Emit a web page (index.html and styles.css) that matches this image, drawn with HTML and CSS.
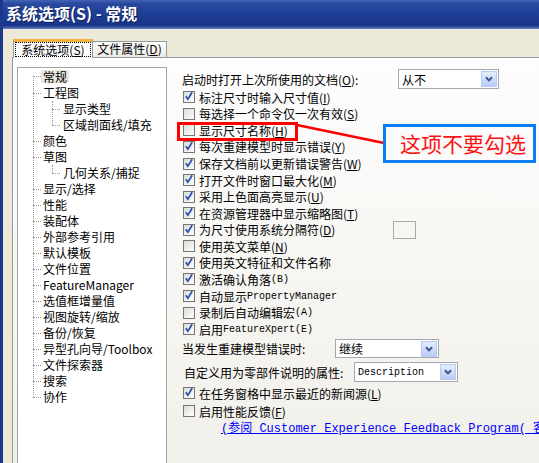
FILE: index.html
```html
<!DOCTYPE html>
<html lang="zh-CN">

<head>
    <meta charset="UTF-8">
    <title>系统选项(S) - 常规</title>
    <link rel="stylesheet" href="styles.css">
</head>

<body>
    <div class="window">
        <div class="titlebar">系统选项(S) - 常规</div>
        <div class="dialog">
            <div class="tabs">
                <div class="tab active"><span class="focus">系统选项(<u>S</u>)</span></div>
                <div class="tab">文件属性(<u>D</u>)</div>
            </div>
            <div class="panel">
                <div class="tree">
                    <ul class="tree-root">
                        <li><span class="label sel">常规</span></li>
                        <li><span class="label">工程图</span>
                            <ul class="tree-sub">
                                <li><span class="label">显示类型</span></li>
                                <li><span class="label">区域剖面线/填充</span></li>
                            </ul>
                        </li>
                        <li><span class="label">颜色</span></li>
                        <li><span class="label">草图</span>
                            <ul class="tree-sub">
                                <li><span class="label">几何关系/捕捉</span></li>
                            </ul>
                        </li>
                        <li><span class="label">显示/选择</span></li>
                        <li><span class="label">性能</span></li>
                        <li><span class="label">装配体</span></li>
                        <li><span class="label">外部参考引用</span></li>
                        <li><span class="label">默认模板</span></li>
                        <li><span class="label">文件位置</span></li>
                        <li><span class="label">FeatureManager</span></li>
                        <li><span class="label">选值框增量值</span></li>
                        <li><span class="label">视图旋转/缩放</span></li>
                        <li><span class="label">备份/恢复</span></li>
                        <li><span class="label">异型孔向导/Toolbox</span></li>
                        <li><span class="label">文件探索器</span></li>
                        <li><span class="label">搜索</span></li>
                        <li><span class="label">协作</span></li>
                    </ul>
                </div>

                <div class="options">
                    <div class="row first">
                        <span class="lbl w-open">启动时打开上次所使用的文档(<u>O</u>):</span>
                        <div class="combo w-never"><span class="combo-text">从不</span><span class="combo-btn"><svg viewBox="0 0 15 16"><path d="M4 6 7.5 9.5 11 6"/></svg></span></div>
                    </div>
                    <div class="row"><span class="cb"><svg viewBox="0 0 12 12"><path d="M2.2 5.2 4.6 8.6 9.8 0.4"/></svg></span>标注尺寸时输入尺寸值(<u>I</u>)</div>
                    <div class="row"><span class="cb"></span>每选择一个命令仅一次有效(<u>S</u>)</div>
                    <div class="row"><span class="cb"></span>显示尺寸名称(<u>H</u>)</div>
                    <div class="row"><span class="cb"><svg viewBox="0 0 12 12"><path d="M2.2 5.2 4.6 8.6 9.8 0.4"/></svg></span>每次重建模型时显示错误(<u>Y</u>)</div>
                    <div class="row"><span class="cb"><svg viewBox="0 0 12 12"><path d="M2.2 5.2 4.6 8.6 9.8 0.4"/></svg></span>保存文档前以更新错误警告(<u>W</u>)</div>
                    <div class="row"><span class="cb"><svg viewBox="0 0 12 12"><path d="M2.2 5.2 4.6 8.6 9.8 0.4"/></svg></span>打开文件时窗口最大化(<u>M</u>)</div>
                    <div class="row"><span class="cb"><svg viewBox="0 0 12 12"><path d="M2.2 5.2 4.6 8.6 9.8 0.4"/></svg></span>采用上色面高亮显示(<u>U</u>)</div>
                    <div class="row"><span class="cb"><svg viewBox="0 0 12 12"><path d="M2.2 5.2 4.6 8.6 9.8 0.4"/></svg></span>在资源管理器中显示缩略图(<u>T</u>)</div>
                    <div class="row"><span class="cb"><svg viewBox="0 0 12 12"><path d="M2.2 5.2 4.6 8.6 9.8 0.4"/></svg></span><span class="lbl w-sep">为尺寸使用系统分隔符(<u>D</u>)</span><span class="sep-box"></span></div>
                    <div class="row"><span class="cb"></span>使用英文菜单(<u>N</u>)</div>
                    <div class="row"><span class="cb"><svg viewBox="0 0 12 12"><path d="M2.2 5.2 4.6 8.6 9.8 0.4"/></svg></span>使用英文特征和文件名称</div>
                    <div class="row"><span class="cb"><svg viewBox="0 0 12 12"><path d="M2.2 5.2 4.6 8.6 9.8 0.4"/></svg></span>激活确认角落<span class="mono">(B)</span></div>
                    <div class="row"><span class="cb"><svg viewBox="0 0 12 12"><path d="M2.2 5.2 4.6 8.6 9.8 0.4"/></svg></span>自动显示 <span class="mono">PropertyManager</span></div>
                    <div class="row"><span class="cb"></span>录制后自动编辑宏<span class="mono">(A)</span></div>
                    <div class="row"><span class="cb"><svg viewBox="0 0 12 12"><path d="M2.2 5.2 4.6 8.6 9.8 0.4"/></svg></span>启用 <span class="mono">FeatureXpert(E)</span></div>

                    <div class="row combo-a">
                        <span class="lbl w-rebuild">当发生重建模型错误时:</span>
                        <div class="combo w-cont"><span class="combo-text">继续</span><span class="combo-btn"><svg viewBox="0 0 15 16"><path d="M4 6 7.5 9.5 11 6"/></svg></span></div>
                    </div>
                    <div class="row combo-b">
                        <span class="lbl w-prop">自定义用为零部件说明的属性:</span>
                        <div class="combo w-desc"><span class="combo-text mono">Description</span><span class="combo-btn"><svg viewBox="0 0 15 16"><path d="M4 6 7.5 9.5 11 6"/></svg></span></div>
                    </div>
                    <div class="row tall"><span class="cb"><svg viewBox="0 0 12 12"><path d="M2.2 5.2 4.6 8.6 9.8 0.4"/></svg></span>在任务窗格中显示最近的新闻源(<u>L</u>)</div>
                    <div class="row tall"><span class="cb"></span>启用性能反馈(<u>F</u>)</div>
                    <div class="row link-row"><a class="link" href="">(参阅 Customer Experience Feedback Program( 客户经历反馈计划))</a></div>
                </div>
            </div>
        </div>

        <!-- annotation drawn over the dialog -->
        <div class="mark-box"></div>
        <svg class="mark-line" viewBox="0 0 539 463"><line x1="297" y1="125" x2="384" y2="143"/></svg>
        <div class="callout">这项不要勾选</div>
    </div>
</body>

</html>
```

FILE: styles.css
```css
* {
    box-sizing: border-box;
    padding: 0;
    margin: 0;
}

body {
    width: 539px;
    height: 463px;
    overflow: hidden;
    color: black;
    font-family: "Noto Sans CJK SC", sans-serif;
    font-size: 12px;
    background-color: #ece9d8;
}

.window {
    position: relative;
    height: 463px;
    border-left: 3px solid #1b398c;
    background-color: #ece9d8;
    overflow: hidden;
}

.titlebar {
    height: 29px;
    padding-left: 3px;
    line-height: 27px;
    color: #fff;
    font-size: 16px;
    font-weight: bold;
    text-shadow: 1px 1px #0b1d5c;
    background: linear-gradient(#4464b5 0%, #2a4aa0 12%, #1e3d94 50%, #19358a 88%, #6b82bd 100%);
}

.dialog {
    padding-top: 10px;
}

/* tabs */
.tabs {
    display: flex;
    align-items: flex-end;
    height: 19px;
    margin-left: 10px;
    margin-bottom: -1px;
    position: relative;
    z-index: 1;
}

.tab {
    height: 16px;
    margin-bottom: 1px;
    padding: 0 4px;
    border: 1px solid #919b9c;
    border-bottom: none;
    background: linear-gradient(#ffffff, #ecebe6);
    line-height: 14px;
    white-space: nowrap;
}

.tab.active {
    width: 80px;
    height: 19px;
    margin-bottom: 0;
    padding: 0 1px;
    border-top: 3px solid #f5b23a;
    background: #fcfcfe;
}

.tab.active .focus {
    display: block;
    height: 15px;
    border: 1px dotted #000;
    text-align: center;
    line-height: 13px;
}

.tab:not(.active) {
    width: 74px;
    border-left: none;
    text-align: center;
}

/* page panel */
.panel {
    display: flex;
    height: 420px;
    margin-left: 9px;
    border: 1px solid #919b9c;
    border-right: none;
    background: linear-gradient(#fdfdfd, #f6f5f1 60%, #f1efe9);
}

.tree {
    flex: none;
    width: 150px;
    height: 420px;
    margin: 9px 0 0 4px;
    border: 1px solid #a3a3a3;
    background-color: #fff;
}

.tree ul {
    list-style: none;
}

.tree-root {
    position: relative;
}

.tree-root::before {
    content: "";
    position: absolute;
    left: 15px;
    top: 8px;
    bottom: 8px;
    border-left: 1px dotted #9a9a9a;
}

.tree-root > li {
    position: relative;
    padding-left: 25px;
}

.tree-root > li::before,
.tree-sub > li::before {
    content: "";
    position: absolute;
    top: 8px;
    width: 8px;
    border-top: 1px dotted #9a9a9a;
}

.tree-root > li::before {
    left: 15px;
}

.tree-sub {
    position: relative;
    margin-left: -25px;
}

.tree-sub::before {
    content: "";
    position: absolute;
    left: 34px;
    top: 0;
    bottom: 8px;
    border-left: 1px dotted #9a9a9a;
}

.tree-sub > li {
    position: relative;
    padding-left: 45px;
}

.tree-sub > li::before {
    left: 34px;
}

.tree .label {
    display: block;
    height: 16px;
    line-height: 16px;
    white-space: nowrap;
}

.tree .label.sel {
    display: inline-block;
    height: 13px;
    margin: 1px 0 2px -2px;
    padding: 0 2px;
    line-height: 13px;
    background-color: #e9e7df;
}

/* option list */
.options {
    flex: 1;
    margin-left: 15px;
    padding-top: 11px;
    white-space: nowrap;
}

.row {
    display: flex;
    align-items: center;
    height: 16.57px;
}

.row.first {
    height: 20px;
}

.row.combo-a {
    height: 23px;
}

.row.combo-b {
    height: 24px;
    padding-left: 2px;
}

.row.tall {
    height: 18px;
}

.row.link-row {
    height: 14px;
    padding-left: 39px;
}

.lbl {
    flex: none;
}

.w-open {
    width: 216px;
}

.w-rebuild {
    width: 153px;
}

.w-prop {
    width: 170px;
}

.w-sep {
    width: 194px;
}

.cb {
    flex: none;
    width: 12px;
    height: 12px;
    margin: 0 4px 0 1px;
    border: 1px solid #767676;
    background: linear-gradient(135deg, #dcdcd6, #ffffff);
}

.cb svg {
    display: block;
    width: 10px;
    height: 10px;
    overflow: visible;
}

.cb svg path {
    fill: none;
    stroke: #2a4fae;
    stroke-width: 2.1;
}

.mono {
    font-family: "Liberation Mono", monospace;
    font-size: 10px;
}

.sep-box {
    width: 23px;
    height: 18px;
    border: 1px solid #a8a8a8;
    background-color: #f7f6f2;
}

.combo {
    display: flex;
    align-items: center;
    height: 19px;
    padding: 1px;
    border: 1px solid #a2a9b0;
    background-color: #fff;
}

.combo-text {
    flex: 1;
    padding-left: 2px;
}

.combo-btn {
    width: 16px;
    height: 16px;
    border: 1px solid #b7cbf4;
    background: linear-gradient(#e4ecfd, #b9cdf7);
}

.combo-btn svg {
    display: block;
    width: 14px;
    height: 14px;
}

.combo-btn path {
    fill: none;
    stroke: #3c5287;
    stroke-width: 2.2;
}

.w-never {
    width: 101px;
    height: 20px;
}

.w-cont,
.w-desc {
    width: 104px;
}

.w-desc {
    height: 20px;
}

.link {
    color: #0000ff;
    font-family: "Liberation Mono", "Noto Sans CJK SC", monospace;
    font-size: 12px;
}

/* red / blue annotation */
.mark-box {
    position: absolute;
    left: 174px;
    top: 122px;
    width: 121px;
    height: 19px;
    border: 3px solid #ff0000;
}

.mark-line {
    position: absolute;
    left: -3px;
    top: 0;
    width: 539px;
    height: 463px;
}

.mark-line line {
    stroke: #ff0000;
    stroke-width: 2.5;
}

.callout {
    position: absolute;
    left: 380px;
    top: 124px;
    width: 153px;
    height: 39px;
    padding-left: 14px;
    border: 3px solid #0a7df5;
    background-color: #fbfbfb;
    color: #ff1010;
    font-size: 21px;
    line-height: 33px;
    white-space: nowrap;
}
```
